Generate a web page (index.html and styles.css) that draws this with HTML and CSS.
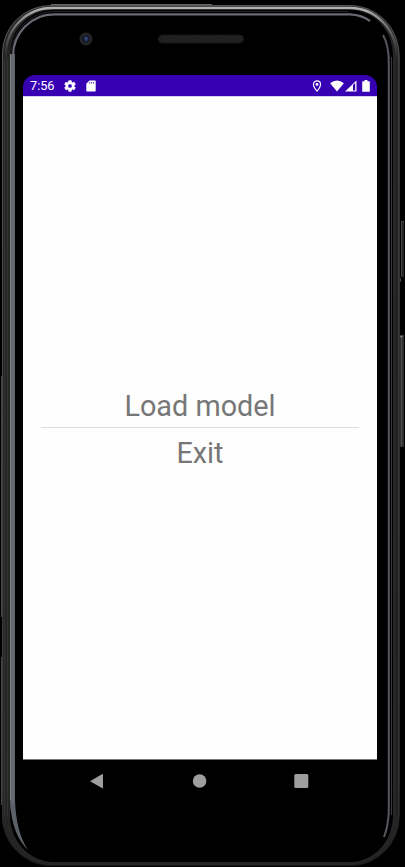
FILE: index.html
```
<!DOCTYPE html>
<html lang="en">
<head>
<meta charset="utf-8">
<title>Model viewer</title>
<link rel="stylesheet" href="styles.css">
</head>
<body>
<div class="phone">
  <svg class="frame" width="405" height="867" viewBox="0 0 405 867" fill="none" aria-hidden="true">
    <defs>
      <linearGradient id="rim" x1="0" y1="0" x2="0" y2="867" gradientUnits="userSpaceOnUse">
        <stop offset="0" stop-color="#c4c4c4"/><stop offset=".012" stop-color="#aaa"/><stop offset=".035" stop-color="#666"/><stop offset=".065" stop-color="#282828"/><stop offset="1" stop-color="#242424"/>
      </linearGradient>
      <linearGradient id="edge" x1="0" y1="0" x2="0" y2="867" gradientUnits="userSpaceOnUse">
        <stop offset="0" stop-color="#555"/><stop offset=".9" stop-color="#3b3a3a"/><stop offset=".98" stop-color="#181818"/>
      </linearGradient>
      <pattern id="mesh" width="3" height="3" patternUnits="userSpaceOnUse">
        <rect width="3" height="3" fill="#1d1e1e"/><path d="M0 0h1v1H0zM2 1h1v1H2z" fill="#292b2b"/>
      </pattern>
    </defs>
    <path d="M1.500 376V617M1.500 657V805" stroke="#454343"/>
    <path d="M51 4.500H212" stroke="#666"/>
    <path d="M51 5H350A49.500 50 0 0 1 399.500 55V816A49.500 50 0 0 1 350 866H52A50 50 0 0 1 2 816V54A49 49 0 0 1 51 5Z" fill="#252525"/>
    <path d="M51 5.500H350A49 50 0 0 1 399 55.500V816A49 49.500 0 0 1 350 865.500H52A49.500 49.500 0 0 1 2.500 816V54A48.500 48.500 0 0 1 51 5.500Z" stroke="url(#edge)"/>
    <path d="M52 8H350A46.500 48 0 0 1 396.500 56V816A46.500 47 0 0 1 350 863.500H53A47 47 0 0 1 6 816V54A46 46 0 0 1 52 8Z" stroke="url(#rim)" stroke-width="2.300"/>
    <path d="M54 9.700H350A43 46 0 0 1 393 56V816A43 46 0 0 1 350 862H54A44 46 0 0 1 10 816V54A44 44 0 0 1 54 9.700Z" fill="#000"/>
    <path d="M4.500 60V816M7.500 60V816" stroke="#333"/>
    <path d="M10.500 810V56A44 45 0 0 1 54 11.500H348" stroke="#3a3a3a" stroke-width=".6"/>
    <path d="M10 54V802Q12 835 28 850Q16 832 15 800V54Z" fill="#5c6068"/>
    <path d="M13 804V56A41 41.600 0 0 1 54 14.400H350Q362 15 370 21" stroke="#686b73" stroke-width="2.200"/>
    <path d="M10.500 800V54" stroke="#858582"/>
    <path d="M383 35Q388.800 45 388.800 62V812Q388 827 384 837" stroke="#55585e" stroke-width="2"/>
    <path d="M391.500 57V815" stroke="#393a3d"/>
    <path d="M394 60V815" stroke="#2d2d2d"/>
    <path d="M396.500 60V815" stroke="#1b1b1b"/>
    <path d="M401 221H404V277H401Z" fill="#252525"/>
    <path d="M401 221.500H404M401.500 222V277M400.500 278V282" stroke="#454545"/>
    <path d="M400 335H404V447H400Z" fill="#303030"/>
    <path d="M401.500 336V446" stroke="#4d4d4d"/>
    <path d="M400.500 336.500H402.500" stroke="#999" stroke-width="1.500"/>
    <circle cx="86" cy="39" r="6.500" fill="#252527"/>
    <circle cx="86" cy="39" r="4" fill="#161b2c"/>
    <circle cx="86.500" cy="39" r="2" fill="#293a69"/>
    <circle cx="85.500" cy="38" r=".7" fill="#6075a8"/>
    <rect x="158.500" y="35" width="85" height="8" rx="4" fill="url(#mesh)" stroke="#171818"/>
  </svg>
  <main class="screen">
    <header class="status">
      <span class="time">7:56</span>
      <svg class="gear" width="14" height="14" viewBox="0 0 24 24" fill="#fff" stroke="#fff" stroke-width=".7"><path d="M19.140 12.940c.04-.3.060-.61.060-.94s-.02-.64-.07-.94l2.030-1.580a.49.49 0 0 0 .12-.61l-1.920-3.320a.49.49 0 0 0-.59-.22l-2.390.96a7 7 0 0 0-1.620-.94l-.36-2.540A.48.48 0 0 0 13.920 2.400h-3.840c-.24 0-.43.170-.47.410l-.36 2.540a7 7 0 0 0-1.620.94l-2.390-.96a.49.49 0 0 0-.59.220L2.740 8.870a.48.48 0 0 0 .12.610l2.030 1.580c-.05.300-.09.630-.09.940s.02.640.07.940l-2.030 1.580a.49.49 0 0 0-.12.610l1.920 3.320c.12.220.37.290.59.220l2.390-.96c.5.380 1.030.700 1.620.940l.36 2.540c.05.240.24.410.48.410h3.840c.24 0 .44-.17.470-.41l.36-2.540a7 7 0 0 0 1.620-.94l2.390.96c.22.080.47 0 .59-.22l1.920-3.320a.48.48 0 0 0-.12-.61zM12 15.600A3.600 3.600 0 1 1 12 8.400a3.600 3.600 0 0 1 0 7.200z"/></svg>
      <svg class="sd" width="10" height="12" viewBox="0 0 10 12"><path d="M3.500.5H9Q9.700.5 9.700 1.200V10.800Q9.700 11.500 9 11.500H1Q.3 11.500.3 10.800V3.700Z" fill="#fff"/><path d="M3.700 2V3.600M5.700 2V3.600M7.700 2V3.600" stroke="#3700b3" stroke-width=".8"/></svg>
      <svg class="pin" width="10" height="12" viewBox="0 0 10 12" fill="none"><path d="M5 .9A3.500 3.500 0 0 0 1.500 4.400C1.500 7 5 11.100 5 11.100S8.500 7 8.500 4.400A3.500 3.500 0 0 0 5 .9Z" stroke="#fff" stroke-width="1.150"/><circle cx="5" cy="4.400" r="1.400" fill="#fff"/></svg>
      <svg class="wifi" width="14" height="12" viewBox="0 0 14 12"><path d="M.1 3.200Q7-2.200 13.900 3.200L7 11.500Z" fill="#fff"/></svg>
      <svg class="signal" width="12" height="12" viewBox="0 0 12 12"><path d="M0 11.500 11.500.5V11.500Z" fill="#fff"/><path d="M8 5V10.500H10.200V3Z" fill="#3700b3"/></svg>
      <svg class="battery" width="8" height="12" viewBox="0 0 8 12"><path d="M2.500 0H5.500V1.200H7.200Q7.800 1.200 7.800 1.800V11.200Q7.800 11.800 7.200 11.800H.8Q.2 11.800.2 11.200V1.800Q.2 1.200.8 1.200H2.500Z" fill="#fff"/></svg>
    </header>
    <section class="menu">
      <div class="item load">Load model</div>
      <div class="item exit">Exit</div>
    </section>
    <nav class="navigation">
      <svg width="16" height="16" viewBox="0 0 16 16"><path d="M1 8.200 13.300 1Q14 .7 14 1.400V15Q14 15.700 13.300 15.300L1 8.200Z" fill="#9e9e9e"/></svg>
      <svg width="16" height="16" viewBox="0 0 16 16"><circle cx="8.600" cy="8" r="6.800" fill="#9e9e9e"/></svg>
      <svg width="16" height="16" viewBox="0 0 16 16"><rect x="1.300" y="1.100" width="14" height="14" rx="1.500" fill="#9e9e9e"/></svg>
    </nav>
  </main>
</div>
</body>
</html>
```
FILE: styles.css
```
* { box-sizing: border-box; }
body { margin: 0; background: #000; font-family: Roboto, sans-serif; overflow: hidden; }
.phone { position: relative; width: 405px; height: 867px; padding: 75px 28px 0 23px; }
.frame { position: absolute; inset: 0; }
svg { display: block; flex-shrink: 0; }
.screen { position: relative; width: 354px; }
.status { height: 21px; display: flex; align-items: center; padding: 0 7px; background: #3700b3; color: #fff; border-radius: 12px 12px 0 0; }
.time { width: 26px; font-size: 12.7px; line-height: 21px; white-space: nowrap; }
.gear { margin-left: 7px; }
.sd { margin-left: 9px; }
.pin { margin-left: auto; }
.wifi { margin-left: 8px; }
.signal { margin-left: 1px; }
.battery { margin-left: 5px; }
.menu { height: 663px; display: flex; flex-direction: column; justify-content: center; padding: 0 18px; background: #fefefe; border-top: 1px solid #d8ccef; }
.item { height: 47px; line-height: 51px; text-align: center; color: #777; font-size: 28.8px; }
.load { border-bottom: 1px solid #ddd; }
.exit { line-height: 50px; }
.navigation { height: 43px; display: flex; align-items: center; padding-left: 66px; gap: 86px; border-top: 1px solid #777; }
```
